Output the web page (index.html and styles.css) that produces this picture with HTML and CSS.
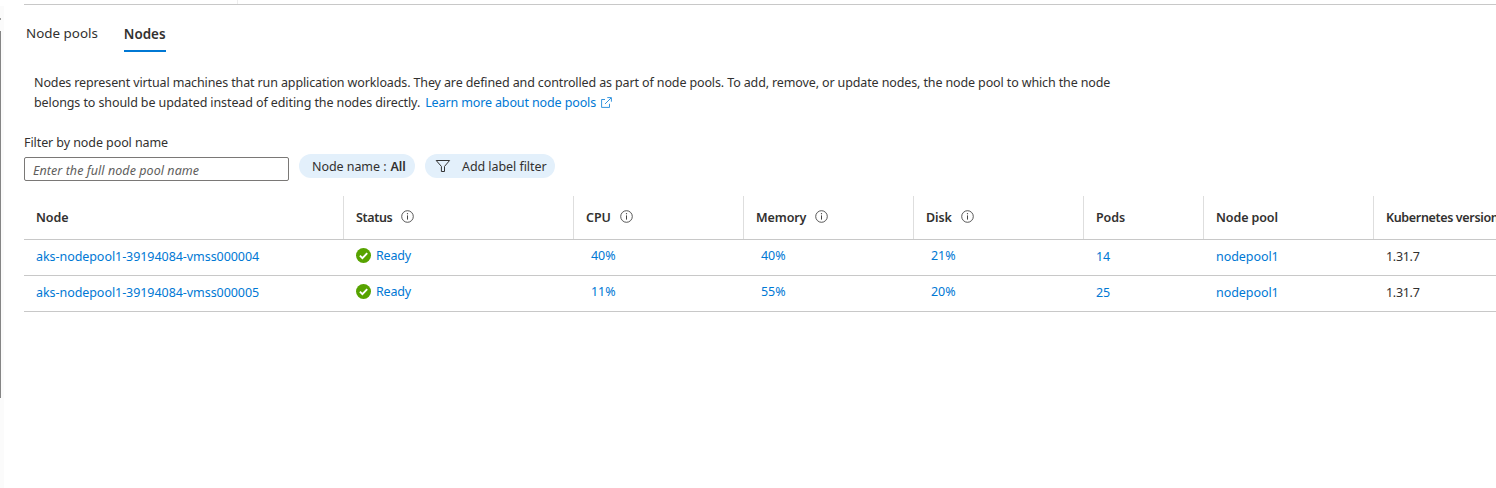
FILE: index.html
```html
<!DOCTYPE html>
<html lang="en">
<head>
<meta charset="utf-8">
<title>Nodes</title>
<link rel="stylesheet" href="styles.css">
</head>
<body>
<svg class="defs" width="0" height="0" aria-hidden="true">
  <symbol id="info" viewBox="0 0 13 13"><circle cx="6.5" cy="6.5" r="5.8" fill="none" stroke="#444" stroke-width=".9"/><path d="M6.5 5.4v4.2" stroke="#444" stroke-width="1"/><circle cx="6.5" cy="3.7" r=".65" fill="#444"/></symbol>
  <symbol id="ok" viewBox="0 0 15 15"><circle cx="7.5" cy="7.5" r="7.5" fill="#57a300"/><path d="M3.9 7.7l2.5 2.5 4.8-5" fill="none" stroke="#fff" stroke-width="1.9"/></symbol>
</svg>
<div class="page">
  <div class="rail"><div class="arrow"></div><div class="thumb"></div></div>
  <main class="main">
    <div class="toolbar"><div class="divider"></div></div>
    <nav class="tabs"><a class="tab">Node pools</a><a class="tab active">Nodes</a></nav>
    <p class="description"><span class="line d1">Nodes represent virtual machines that run application workloads. They are defined and controlled as part of node pools. To add, remove, or update nodes, the node pool to which the node</span><span class="line"><span class="d2">belongs to should be updated instead of editing the nodes directly.</span><a class="learn">Learn more about node pools</a><svg class="external" width="11" height="11" viewBox="0 0 11 11" fill="none" stroke="#0078d4" stroke-width=".8"><path d="M4 2.5H.6v7.9h7.9V6.8M4 7L10 1M6.3.6h4.1v4.1"/></svg></span></p>
    <div class="filters">
      <label class="field"><span class="field-label">Filter by node pool name</span><span class="input">Enter the full node pool name</span></label>
      <button class="pill name-pill">Node name :<b>All</b></button>
      <button class="pill label-pill"><svg width="16" height="14" viewBox="0 0 16 14" fill="none" stroke="#333" stroke-width="1"><path d="M1.2 1.5h13.4L9.5 7.4v5.1H6.4V7.4z"/></svg><span>Add label filter</span></button>
    </div>
    <div class="table">
      <div class="row head">
        <div>Node</div>
        <div>Status<svg class="info"><use href="#info"/></svg></div>
        <div>CPU<svg class="info"><use href="#info"/></svg></div>
        <div>Memory<svg class="info"><use href="#info"/></svg></div>
        <div>Disk<svg class="info"><use href="#info"/></svg></div>
        <div>Pods</div>
        <div>Node pool</div>
        <div class="k8s">Kubernetes version</div>
      </div>
      <div class="row">
        <div class="node">aks-nodepool1-39194084-vmss000004</div>
        <div class="status"><svg class="ok"><use href="#ok"/></svg><span>Ready</span></div>
        <div class="metric">40%</div><div class="metric">40%</div><div class="metric">21%</div>
        <div>14</div><div class="pool">nodepool1</div><div class="version">1.31.7</div>
      </div>
      <div class="row">
        <div class="node">aks-nodepool1-39194084-vmss000005</div>
        <div class="status"><svg class="ok"><use href="#ok"/></svg><span>Ready</span></div>
        <div class="metric">11%</div><div class="metric">55%</div><div class="metric">20%</div>
        <div>25</div><div class="pool">nodepool1</div><div class="version">1.31.7</div>
      </div>
    </div>
  </main>
</div>
</body>
</html>
```
FILE: styles.css
```css
* { box-sizing: border-box; }
body { margin: 0; background: #fff; color: #323130; font-family: "Noto Sans", "Open Sans", sans-serif; font-size: 12.5px; line-height: 20px; overflow: hidden; }
.defs { display: block; }
.page { display: flex; height: 488px; overflow: hidden; }
.rail { width: 4px; margin-right: 20px; margin-top: 6px; background: #fbfbfb; flex: none; }
.arrow { width: 1px; height: 2px; margin-top: 12px; background: #999; }
.thumb { width: 1px; height: 367px; margin-top: 11px; background: #858585; }
.main { width: 1472px; flex: none; }
.toolbar { height: 5px; border-bottom: 1px solid #c8c8c8; }
.divider { width: 1px; height: 4px; margin-left: 213px; background: #eee; }
.tabs { display: flex; height: 47px; padding-left: 2px; gap: 26px; white-space: nowrap; font-size: 13.4px; }
.tab { padding-top: 18px; }
.active { height: 47px; padding-top: 19px; border-bottom: 2px solid #0078d4; font-weight: 600; }
.description { margin: 21px 0 0 10px; }
.line { display: flex; height: 20px; white-space: nowrap; letter-spacing: -.125px; }
.d2 { letter-spacing: -.1px; }
.learn { margin-left: 5px; }
.learn, .row { color: #0078d4; }
.external { margin: 4px 0 0 5px; }
.filters { display: flex; margin-top: 20px; height: 49px; }
.field { display: flex; flex-direction: column; width: 265px; }
.field-label { height: 24px; line-height: 20px; letter-spacing: -.08px; }
.input { height: 24px; border: 1px solid #7a7876; border-radius: 2px; padding-left: 8px; line-height: 25px; letter-spacing: .06px; font-style: italic; color: #605e5c; }
.pill { display: flex; align-items: center; height: 24px; margin-top: 21px; border: 0; border-radius: 12px; background: #e3f0fb; color: #323130; font: inherit; letter-spacing: -.06px; white-space: nowrap; }
.name-pill { width: 116px; margin-left: 10px; padding: 1px 0 0 13px; }
.name-pill b { margin-left: 4px; font-weight: 600; }
.label-pill { width: 130px; margin-left: 10px; padding: 1px 0 0 10px; gap: 11px; }
.label-pill svg { margin-top: -1px; }
.table { margin-top: 13px; }
.row { display: grid; grid-template-columns: 320px 230px 170px 170px 170px 120px 170px 122px; height: 36px; border-bottom: 1px solid #c8c8c8; white-space: nowrap; overflow: hidden; letter-spacing: -.06px; }
.row > div { padding: 7px 0 0 12px; }
.head { height: 45px; color: #323130; font-weight: 600; letter-spacing: -.1px; }
.row.head > div { display: flex; height: 43px; margin-top: 1px; padding-top: 12px; }
.row.head > div:not(:last-child) { border-right: 1px solid #dedede; }
.info { width: 13px; height: 13px; margin: 2px 0 0 9px; }
.head > div:nth-child(2) { letter-spacing: -.35px; }
.row > .status { display: flex; padding-top: 6px; letter-spacing: -.2px; }
.ok { width: 15px; height: 15px; margin: 2px 5px 0 0; }
.row > .metric:not(:first-child) { padding: 6px 0 0 17px; }
.version { color: #323130; letter-spacing: -.3px; }
.row .k8s { letter-spacing: -.35px; }
```
